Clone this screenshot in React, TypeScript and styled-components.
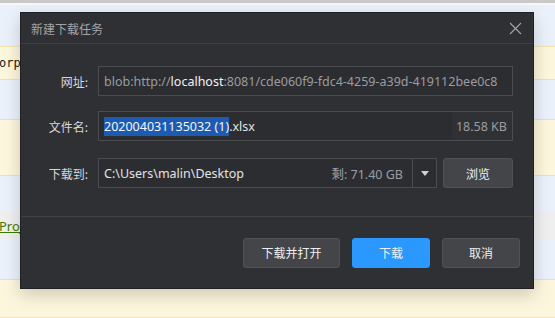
import React from "react";
import styled, { createGlobalStyle } from "styled-components";

const Global = createGlobalStyle`
  html, body { margin: 0; padding: 0; }
  body {
    width: 555px; height: 318px; overflow: hidden;
    font-family: "Noto Sans CJK SC", "Noto Sans", sans-serif;
    background: #eaf1fa;
  }
`;

const Page = styled.div`
  position: relative;
  width: 555px;
  height: 318px;
  overflow: hidden;
  display: flex;
  flex-direction: column;
`;

const TopStrip = styled.div`
  height: 3px;
  background: #c9c9c9;
  border-bottom: 2px solid #f7f7f7;
`;

const Row = styled.div<{ $tone: "blue" | "yellow" | "gray"; $h: number }>`
  height: ${(p) => p.$h}px;
  box-sizing: border-box;
  display: flex;
  align-items: center;
  background: ${(p) =>
    p.$tone === "yellow" ? "#fcf6dc" : p.$tone === "gray" ? "#efefef" : "#eaf1fa"};
  border-top: 1px solid ${(p) => (p.$tone === "yellow" ? "#eee1b5" : "transparent")};
  border-bottom: 1px solid ${(p) => (p.$tone === "yellow" ? "#eee1b5" : "transparent")};
`;

const Code = styled.span`
  font-family: "DejaVu Sans Mono", monospace;
  font-size: 12px;
  color: #222;
  margin-left: -1px;
`;

const Link = styled.span`
  font-family: "Noto Sans", sans-serif;
  font-size: 13px;
  color: #3c7a00;
  text-decoration: underline;
  margin-left: -1px;
`;

const Dialog = styled.div`
  position: absolute;
  left: 20px;
  top: 12px;
  width: 514px;
  height: 277px;
  box-sizing: border-box;
  background: #2f3034;
  border: 1px solid #1f2023;
  box-shadow: 0 6px 16px rgba(0, 0, 0, 0.18);
  display: flex;
  flex-direction: column;
  font-size: 12px;
`;

const Header = styled.div`
  height: 31px;
  box-sizing: border-box;
  border-bottom: 1px solid #3f4044;
  display: flex;
  align-items: center;
  justify-content: space-between;
  padding: 0 11px 0 10px;
`;

const Title = styled.span`
  color: #a3a4a8;
  font-size: 12px;
`;

const CloseBtn = styled.span`
  display: flex;
  width: 13px;
  height: 13px;
`;

const Body = styled.div`
  flex: 1;
  display: flex;
  flex-direction: column;
  padding: 22px 20px 0 0;
  border-bottom: 1px solid #414246;
`;

const FieldRow = styled.div<{ $mb: number }>`
  display: flex;
  align-items: center;
  height: 30px;
  margin-bottom: ${(p) => p.$mb}px;
`;

const Label = styled.span`
  width: 67px;
  text-align: right;
  color: #d8d9dc;
  margin-right: 10px;
  flex-shrink: 0;
`;

const InputBox = styled.div<{ $w?: number }>`
  ${(p) => (p.$w ? `width: ${p.$w}px;` : "flex: 1;")}
  height: 30px;
  box-sizing: border-box;
  border: 1px solid #4b4c50;
  background: #2c2d31;
  display: flex;
  align-items: center;
  overflow: hidden;
`;

const InputText = styled.span<{ $color?: string }>`
  flex: 1;
  padding-left: 5px;
  color: ${(p) => p.$color ?? "#e2e3e6"};
  white-space: nowrap;
  font-family: "Noto Sans", "Noto Sans CJK SC", sans-serif;
  font-size: 12.5px;
`;

const Strong = styled.span`
  color: #f2f2f2;
`;

const Selected = styled.span`
  background: #1d5bb2;
  color: #f4f6fa;
  padding: 1px 0;
`;

const SizeCell = styled.span`
  width: 60px;
  height: 100%;
  display: flex;
  align-items: center;
  justify-content: flex-end;
  padding-right: 5px;
  box-sizing: border-box;
  background: #303135;
  color: #9c9da1;
  font-family: "Noto Sans", sans-serif;
  font-size: 12.5px;
`;

const Free = styled.span`
  color: #9c9da1;
  padding-right: 9px;
  white-space: nowrap;
  font-family: "Noto Sans", "Noto Sans CJK SC", sans-serif;
  font-size: 12.5px;
`;

const Arrow = styled.span`
  width: 23px;
  height: 100%;
  border-left: 1px solid #4b4c50;
  display: flex;
  align-items: center;
  justify-content: center;
`;

const Button = styled.button<{ $w: number; $primary?: boolean }>`
  width: ${(p) => p.$w}px;
  height: 30px;
  box-sizing: border-box;
  border-radius: 3px;
  border: 1px solid ${(p) => (p.$primary ? "#2b98ff" : "#515256")};
  background: ${(p) => (p.$primary ? "#2b98ff" : "#444549")};
  color: #eef0f3;
  font-family: "Noto Sans CJK SC", sans-serif;
  font-size: 12px;
  padding: 0;
  display: flex;
  align-items: center;
  justify-content: center;
  flex-shrink: 0;
`;

const Footer = styled.div`
  height: 71px;
  display: flex;
  align-items: center;
  justify-content: flex-end;
  padding-right: 13px;
  gap: 12px;
`;

export default function App() {
  return (
    <>
      <Global />
      <Page>
        <TopStrip />
        <Row $tone="blue" $h={42} />
        <Row $tone="yellow" $h={34}>
          <Code>orprocess</Code>
        </Row>
        <Row $tone="blue" $h={40} />
        <Row $tone="yellow" $h={58} />
        <Row $tone="blue" $h={37} />
        <Row $tone="gray" $h={28}>
          <Link>Project</Link>
        </Row>
        <Row $tone="blue" $h={40} />
        <Row $tone="yellow" $h={40} />

        <Dialog>
          <Header>
            <Title>新建下载任务</Title>
            <CloseBtn>
              <svg width="13" height="13" viewBox="0 0 13 13">
                <path d="M1 1L12 12M12 1L1 12" stroke="#a4a5a9" strokeWidth="1.1" fill="none" />
              </svg>
            </CloseBtn>
          </Header>
          <Body>
            <FieldRow $mb={15}>
              <Label>网址:</Label>
              <InputBox>
                <InputText $color="#9b9ca0">
                  blob:http://<Strong>localhost</Strong>:8081/cde060f9-fdc4-4259-a39d-419112bee0c8
                </InputText>
              </InputBox>
            </FieldRow>
            <FieldRow $mb={17}>
              <Label>文件名:</Label>
              <InputBox>
                <InputText>
                  <Selected>202004031135032 (1)</Selected>.xlsx
                </InputText>
                <SizeCell>18.58 KB</SizeCell>
              </InputBox>
            </FieldRow>
            <FieldRow $mb={0}>
              <Label>下载到:</Label>
              <InputBox $w={340}>
                <InputText>C:\Users\malin\Desktop</InputText>
                <Free>剩: 71.40 GB</Free>
                <Arrow>
                  <svg width="8" height="5" viewBox="0 0 8 5">
                    <path d="M0 0H8L4 5Z" fill="#d0d1d4" />
                  </svg>
                </Arrow>
              </InputBox>
              <Button $w={70} style={{ marginLeft: 6 }}>浏览</Button>
            </FieldRow>
          </Body>
          <Footer>
            <Button $w={97}>下载并打开</Button>
            <Button $w={78} $primary>下载</Button>
            <Button $w={78}>取消</Button>
          </Footer>
        </Dialog>
      </Page>
    </>
  );
}
